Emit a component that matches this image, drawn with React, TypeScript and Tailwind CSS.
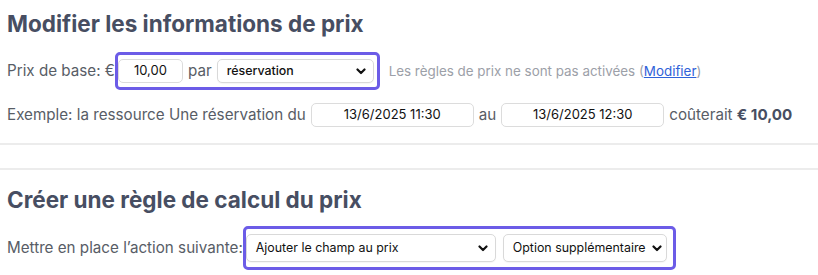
import React from 'react';

const Chevron = () => (
	<svg width="10" height="7" viewBox="0 0 10 7" className="shrink-0">
		<path d="M1.5 1.5l3.5 3.5 3.5-3.5" fill="none" stroke="#111" strokeWidth="2.2" strokeLinecap="round" strokeLinejoin="round" />
	</svg>
);

const FakeSelect = ({ label, className, bold }: { label: string; className: string; bold?: boolean }) => (
	<div
		className={
			'flex items-center justify-between gap-[6px] whitespace-nowrap bg-white border border-[#d9d9d9] rounded-[5px] pl-[9px] pr-[7px] text-[12.4px] text-[#111] shadow-[0_1px_1px_rgba(0,0,0,0.04)] ' +
			className
		}
	>
		<span className={bold ? 'font-medium' : ''}>{label}</span>
		<Chevron />
	</div>
);

const FakeInput = ({ value, className }: { value: string; className: string }) => (
	<div
		className={
			'flex items-center justify-center bg-white border border-[#dcdcdc] rounded-[5px] text-[13px] text-[#111] ' + className
		}
	>
		{value}
	</div>
);

export default function App() {
	return (
		<div className="w-[818px] h-[275px] bg-white overflow-hidden font-['Inter','Liberation_Sans',sans-serif] text-[#585d66]">
			<div className="pl-[7px]">
				<h2 className="pt-[10px] text-[22.5px] leading-[28px] font-bold text-[#474e62]">
					Modifier les informations de prix
				</h2>
				<div className="mt-[14px] flex items-center h-[38px] text-[15.2px] whitespace-nowrap">
					<span>Prix de base: €</span>
					<div className="flex items-center h-[38px] border-[3px] border-[#6c5ce7] rounded-[5px] pl-0 pr-[3px] gap-[5px]">
						<FakeInput value="10,00" className="w-[65px] h-[24px]" />
						<span>par</span>
						<FakeSelect label="réservation" bold className="w-[157px] h-[24px]" />
					</div>
					<span className="ml-[9px] text-[13.4px] text-[#9ca0a8]">
						Les règles de prix ne sont pas activées (
						<a href="#" className="text-[#2f62d9] underline">
							Modifier
						</a>
						)
					</span>
				</div>
				<div className="mt-[13px] flex items-center h-[24px] text-[15.2px] gap-[5px] whitespace-nowrap">
					<span>Exemple: la ressource Une réservation du</span>
					<FakeInput value="13/6/2025 11:30" className="w-[163px] h-[24px]" />
					<span>au</span>
					<FakeInput value="13/6/2025 12:30" className="w-[163px] h-[24px]" />
					<span>
						coûterait <b className="font-bold text-[#474e62]">€ 10,00</b>
					</span>
				</div>
			</div>
			<div className="mt-[16px] h-[2px] bg-[#ececec]" />
			<div className="mt-[23px] h-[2px] bg-[#ececec]" />
			<div className="pl-[7px]">
				<h2 className="mt-[16px] text-[22.5px] leading-[28px] font-bold text-[#474e62]">
					Créer une règle de calcul du prix
				</h2>
				<div className="mt-[12px] flex items-center h-[44px] text-[15.2px] whitespace-nowrap">
					<span>Mettre en place l’action suivante:</span>
					<div className="flex items-center h-[44px] border-[3px] border-[#6c5ce7] rounded-[5px] pl-0 pr-[6px] gap-[7px]">
						<FakeSelect label="Ajouter le champ au prix" className="w-[250px] h-[28px]" />
						<FakeSelect label="Option supplémentaire" className="w-[164px] h-[28px]" />
					</div>
				</div>
			</div>
		</div>
	);
}
